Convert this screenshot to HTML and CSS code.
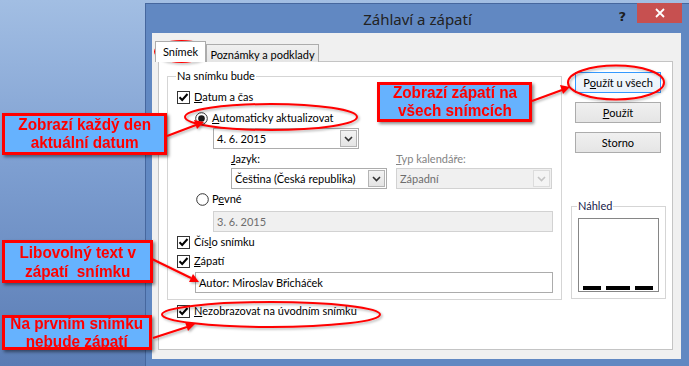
FILE: index.html
```html
<!DOCTYPE html>
<html lang="cs">
<head>
    <meta charset="UTF-8">
    <meta name="viewport" content="width=device-width, initial-scale=1.0">
    <title>Záhlaví a zápatí</title>
    <link rel="stylesheet" href="styles.css">
</head>
<body>
<div class="desk">
    <div class="dialog">
        <div class="titlebar">
            <span class="title">Záhlaví a zápatí</span>
            <div class="controls">
                <span class="help">?</span>
                <span class="close">
                    <svg width="10" height="10" viewBox="0 0 10 10"><path d="M1 1 L9 9 M9 1 L1 9" stroke="#fff" stroke-width="1.8"/></svg>
                </span>
            </div>
        </div>

        <div class="client">
            <div class="tabs">
                <div class="tab active">Snímek</div>
                <div class="tab">Poznámky a podklady</div>
            </div>

            <div class="panel">
                <div class="main">
                    <div class="group">
                        <div class="legend">Na snímku bude</div>

                        <div class="row r-datum">
                            <svg class="cb" width="13" height="13" viewBox="0 0 13 13"><rect x="0.5" y="0.5" width="12" height="12" fill="#fff" stroke="#333"/><path d="M2.5 6.2 L5.2 9 L10.5 3" fill="none" stroke="#000" stroke-width="2"/></svg>
                            <span><span class="u">D</span>atum a čas</span>
                        </div>
                        <div class="row r-auto">
                            <svg class="rb" width="13" height="13" viewBox="0 0 13 13"><circle cx="6.5" cy="6.5" r="5.8" fill="#fff" stroke="#333"/><circle cx="6.5" cy="6.5" r="3.3" fill="#1a1a1a"/></svg>
                            <span><span class="u">A</span>utomaticky aktualizovat</span>
                        </div>
                        <div class="field combo f-date">
                            <span class="val">4. 6. 2015</span>
                            <span class="drop"><svg width="9" height="6" viewBox="0 0 9 6"><path d="M1 1 L4.5 4.5 L8 1" fill="none" stroke="#333" stroke-width="1.6"/></svg></span>
                        </div>
                        <div class="r-labels">
                            <span class="lbl-lang"><span class="u">J</span>azyk:</span>
                            <span class="lbl-cal"><span class="u">T</span>yp kalendáře:</span>
                        </div>
                        <div class="r-combos">
                            <div class="field combo">
                                <span class="val">Čeština (Česká republika)</span>
                                <span class="drop"><svg width="9" height="6" viewBox="0 0 9 6"><path d="M1 1 L4.5 4.5 L8 1" fill="none" stroke="#333" stroke-width="1.6"/></svg></span>
                            </div>
                            <div class="field combo disabled">
                                <span class="val">Západní</span>
                                <span class="drop"><svg width="9" height="6" viewBox="0 0 9 6"><path d="M1 1 L4.5 4.5 L8 1" fill="none" stroke="#c4c4c4" stroke-width="1.6"/></svg></span>
                            </div>
                        </div>
                        <div class="row r-pevne">
                            <svg class="rb" width="13" height="13" viewBox="0 0 13 13"><circle cx="6.5" cy="6.5" r="5.8" fill="#fff" stroke="#333"/></svg>
                            <span>P<span class="u">e</span>vné</span>
                        </div>
                        <div class="field disabled f-fixed"><span class="val">3. 6. 2015</span></div>
                        <div class="row r-cislo">
                            <svg class="cb" width="13" height="13" viewBox="0 0 13 13"><rect x="0.5" y="0.5" width="12" height="12" fill="#fff" stroke="#333"/><path d="M2.5 6.2 L5.2 9 L10.5 3" fill="none" stroke="#000" stroke-width="2"/></svg>
                            <span>Čís<span class="u">l</span>o snímku</span>
                        </div>
                        <div class="row r-zapati">
                            <svg class="cb" width="13" height="13" viewBox="0 0 13 13"><rect x="0.5" y="0.5" width="12" height="12" fill="#fff" stroke="#333"/><path d="M2.5 6.2 L5.2 9 L10.5 3" fill="none" stroke="#000" stroke-width="2"/></svg>
                            <span><span class="u">Z</span>ápatí</span>
                        </div>
                        <div class="field f-footer"><span class="val">Autor: Miroslav Břicháček</span></div>
                    </div>

                    <div class="row r-nezobr">
                        <svg class="cb" width="13" height="13" viewBox="0 0 13 13"><rect x="0.5" y="0.5" width="12" height="12" fill="#fff" stroke="#333"/><path d="M2.5 6.2 L5.2 9 L10.5 3" fill="none" stroke="#000" stroke-width="2"/></svg>
                        <span><span class="u">N</span>ezobrazovat na úvodním snímku</span>
                    </div>
                </div>

                <div class="side">
                    <div class="btn default">P<span class="u">o</span>užít u všech</div>
                    <div class="btn"><span class="u">P</span>oužít</div>
                    <div class="btn">Storno</div>

                    <div class="group preview-group">
                        <div class="legend">Náhled</div>
                        <div class="preview">
                            <span class="bar short"></span>
                            <span class="bar long"></span>
                            <span class="bar short"></span>
                        </div>
                    </div>
                </div>
            </div>
        </div>
    </div>

    <!-- callouts drawn over the screenshot -->
    <div class="callout c1"><span>Zobrazí každý den<br>aktuální datum</span></div>
    <div class="callout c2"><span>Zobrazí zápatí na<br>všech snímcích</span></div>
    <div class="callout c3"><span>Libovolný text v<br>zápatí&nbsp; snímku</span></div>
    <div class="callout c4"><span>Na prvním snímku<br>nebude zápatí</span></div>

    <svg class="marks" width="689" height="366" viewBox="0 0 689 366">
        <defs>
            <filter id="sh" x="-10%" y="-30%" width="120%" height="160%">
                <feDropShadow dx="1.5" dy="1.5" stdDeviation="1" flood-color="#000" flood-opacity="0.3"/>
            </filter>
        </defs>
        <g fill="none" stroke="#f00" stroke-width="2" filter="url(#sh)">
            <ellipse cx="181.5" cy="51.5" rx="26.5" ry="10.5"/>
            <ellipse cx="271" cy="117" rx="86" ry="13"/>
            <ellipse cx="616" cy="82.5" rx="48" ry="17"/>
            <ellipse cx="271" cy="314.5" rx="109" ry="12.5"/>
            <path d="M167 136 L196 125"/>
            <path d="M532 101 L562 90"/>
            <path d="M152 259 L191 278"/>
            <path d="M153 338 L187 327"/>
        </g>
        <g fill="#f00" filter="url(#sh)">
            <path d="M204 122 L194 120 L197 129 Z"/>
            <path d="M570 87 L560 85 L563 94 Z"/>
            <path d="M199 282 L193 274 L189 282 Z"/>
            <path d="M195 324 L185 322 L188 331 Z"/>
        </g>
    </svg>
</div>
</body>
</html>
```

FILE: styles.css
```css
body {
    margin: 0;
    width: 689px;
    height: 366px;
    overflow: hidden;
    font-family: Lato, "Liberation Sans", sans-serif;
    font-size: 11px;
    color: #000;
}

.desk {
    position: relative;
    width: 689px;
    height: 366px;
    overflow: hidden;
    background: linear-gradient(#a2bee3, #7e9fd1 45%, #5a7cb4);
}

/* dialog window */
.dialog {
    position: absolute;
    left: 145px;
    top: 3px;
    width: 544px;
    height: 363px;
    box-sizing: border-box;
    border-left: 1px solid #46679e;
    border-top: 1px solid #46679e;
    background: #6188c2;
    display: flex;
    flex-direction: column;
}

.titlebar {
    height: 29px;
    display: grid;
    grid-template-columns: 1fr auto;
}

.title {
    grid-area: 1 / 1 / 2 / 3;
    align-self: center;
    justify-self: center;
    font-family: "Noto Sans", sans-serif;
    font-size: 15px;
    color: #222;
    margin-top: 1px;
}

.controls {
    grid-area: 1 / 2 / 2 / 3;
    display: flex;
    align-items: flex-start;
    margin-top: -1px;
    margin-right: 7px;
}

.help {
    font-family: "DejaVu Sans", sans-serif;
    font-weight: bold;
    font-size: 13px;
    color: #1d1d1d;
    margin: 6px 11px 0 0;
}

.close {
    width: 45px;
    height: 20px;
    background: #c75050;
    display: flex;
    align-items: center;
    justify-content: center;
}

.client {
    margin: 0 8px 0 6px;
    height: 326px;
    box-sizing: border-box;
    padding: 8px 8px 0 6px;
    background: #f0f0f0;
}

/* tabs */
.tabs {
    display: flex;
    align-items: flex-end;
    height: 21px;
    margin-left: -3px;
    position: relative;
    z-index: 1;
}

.tab {
    box-sizing: border-box;
    height: 18px;
    border: 1px solid #acacac;
    border-bottom: none;
    background: linear-gradient(#f0f0f0, #e5e5e5);
    display: flex;
    align-items: center;
    justify-content: center;
    width: 113px;
    padding-top: 1px;
    white-space: nowrap;
}

.tab.active {
    width: 51px;
    height: 21px;
    background: #fff;
    padding-bottom: 2px;
}

.panel {
    margin-top: -1px;
    height: 289px;
    box-sizing: border-box;
    border: 1px solid #c4c4c4;
    background: #fff;
    display: flex;
}

.main {
    width: 403px;
    padding: 14px 0 0 8px;
    box-sizing: border-box;
}

.group {
    box-sizing: border-box;
    width: 395px;
    border: 1px solid #d5d5d5;
    padding-bottom: 6px;
}

.legend {
    margin: -9px 0 0 8px;
    padding: 0 1px;
    width: max-content;
    height: 16px;
    line-height: 16px;
    background: #fff;
}

.u {
    text-decoration: underline;
    text-underline-offset: 1px;
}

.row {
    display: flex;
    align-items: center;
    gap: 4px;
    height: 16px;
    line-height: 16px;
    white-space: nowrap;
}

.cb, .rb {
    flex: none;
}

.r-datum { margin: 5px 0 0 9px; }
.r-auto { margin: 5px 0 0 27px; }
.r-pevne { margin: 2px 0 0 28px; gap: 3px; }
.r-cislo { margin: 2px 0 0 9px; }
.r-zapati { margin: 3px 0 0 9px; }
.r-nezobr { margin: 3px 0 0 10px; }

/* text boxes and combos */
.field {
    box-sizing: border-box;
    height: 21px;
    border: 1px solid #acacac;
    background: #fff;
    display: flex;
    align-items: center;
    padding-left: 3px;
    white-space: nowrap;
}

.field.disabled {
    border-color: #d2d2d2;
    background: #f0f0f0;
    color: #6d6d6d;
}

.combo .val {
    flex: 1;
}

.drop {
    box-sizing: border-box;
    width: 17px;
    height: 17px;
    margin-right: 1px;
    border: 1px solid #b4b4b4;
    background: linear-gradient(#f3f3f3, #e4e4e4);
    display: flex;
    align-items: center;
    justify-content: center;
}

.disabled .drop {
    border-color: #dcdcdc;
    background: #f4f4f4;
}

.f-date { margin: 2px 0 0 45px; width: 146px; }
.f-fixed { margin: 4px 0 0 45px; width: 340px; }
.f-footer { margin: 3px 0 0 27px; width: 358px; }

.r-labels {
    margin: 2px 0 0 63px;
    height: 15px;
    line-height: 15px;
    display: flex;
}

.lbl-lang { width: 165px; }
.lbl-cal { color: #838383; }

.r-combos {
    margin: 2px 0 0 63px;
    display: flex;
    gap: 9px;
}

.r-combos .combo {
    width: 156px;
}

/* right column */
.side {
    margin-left: 9px;
    width: 95px;
    padding-top: 10px;
    display: flex;
    flex-direction: column;
}

.btn {
    box-sizing: border-box;
    margin-left: 4px;
    width: 86px;
    height: 21px;
    margin-bottom: 9px;
    border: 1px solid #acacac;
    background: linear-gradient(#f0f0f0, #e5e5e5);
    display: flex;
    align-items: center;
    justify-content: center;
    white-space: nowrap;
}

.btn.default {
    border-color: #3399ff;
    background: linear-gradient(#f4f9fd, #e9f1fa);
}

.preview-group {
    width: 95px;
    height: 93px;
    margin-top: 44px;
    padding-bottom: 0;
}

.preview-group .legend {
    margin-left: 5px;
    color: #16204a;
}

.preview {
    box-sizing: border-box;
    margin: 4px 0 0 6px;
    width: 81px;
    height: 74px;
    border: 1px solid #868686;
    background: #fff;
    display: flex;
    align-items: flex-end;
    gap: 5px;
    padding: 0 0 1px 4px;
}

.bar {
    height: 4px;
    background: #000;
}

.bar.short { width: 18px; }
.bar.long { width: 24px; }

/* annotations */
.callout {
    position: absolute;
    box-sizing: border-box;
    border: 3px solid #f00;
    background: #66b2fe;
    box-shadow: 2px 2px 3px rgba(0, 0, 0, 0.45);
    color: #f00;
    font-family: "Liberation Sans", Arial, sans-serif;
    font-weight: bold;
    font-size: 17px;
    line-height: 18px;
    text-align: center;
    display: flex;
    align-items: center;
    justify-content: center;
    white-space: nowrap;
}

.callout span {
    display: inline-block;
    transform: scaleX(0.9);
}

.c1 { left: 2px; top: 113px; width: 165px; height: 42px; }
.c2 { left: 377px; top: 82px; width: 155px; height: 40px; }
.c3 { left: 2px; top: 240px; width: 151px; height: 43px; line-height: 19px; }
.c4 { left: 2px; top: 315px; width: 150px; height: 35px; }

.marks {
    position: absolute;
    left: 0;
    top: 0;
    pointer-events: none;
}
```
